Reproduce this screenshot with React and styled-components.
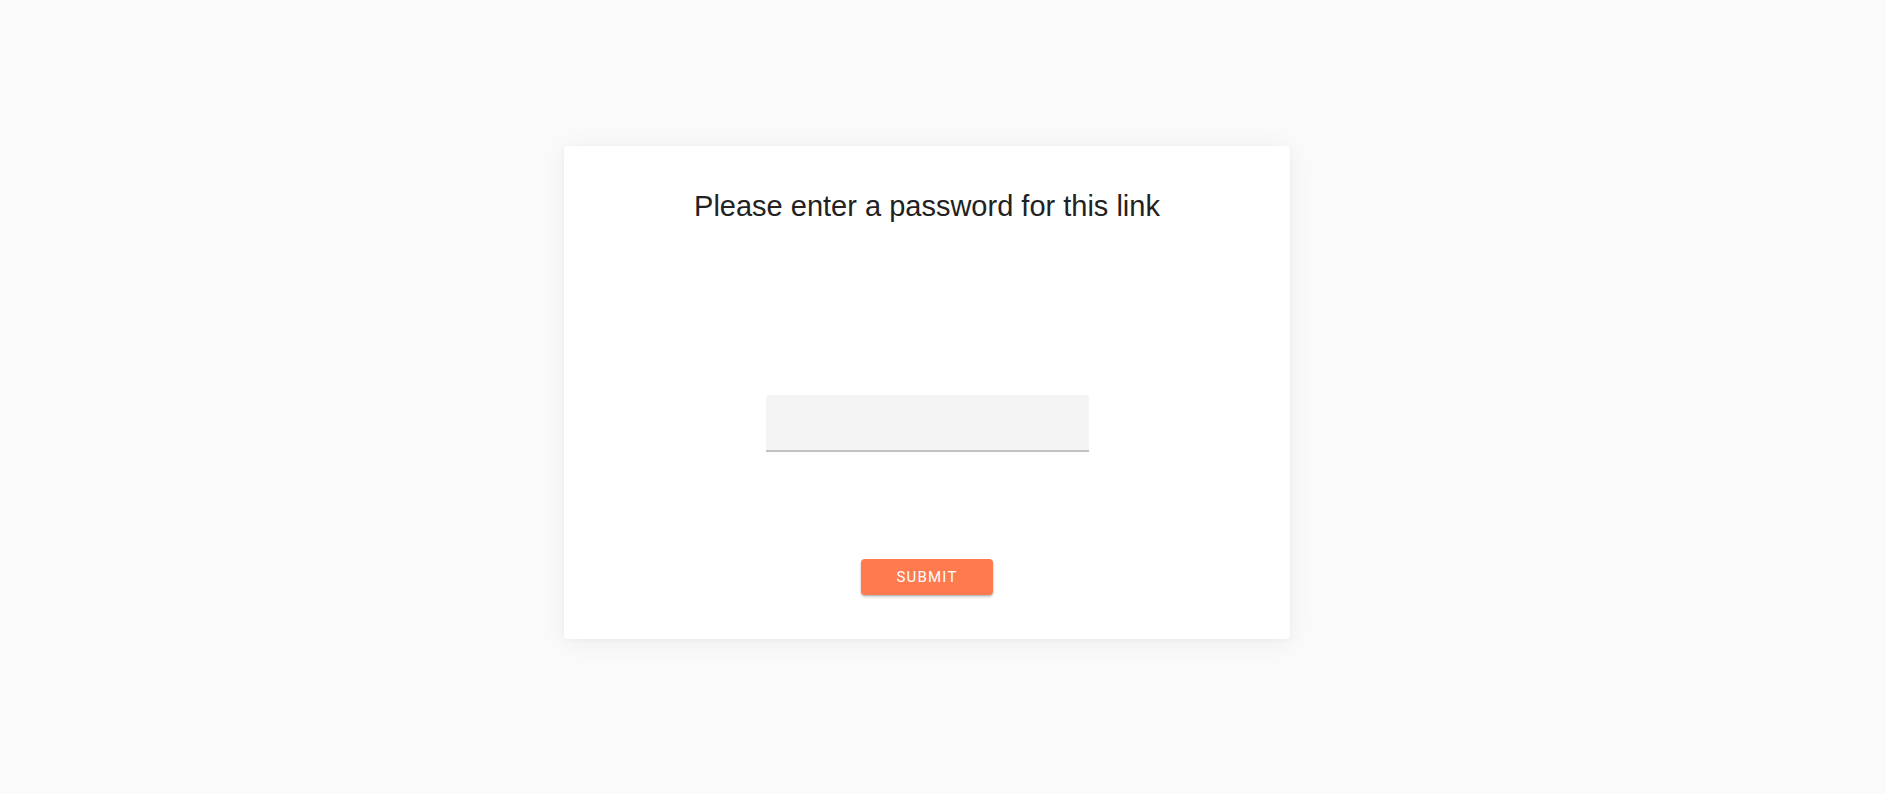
import React, { useState } from 'react';
import styled, { createGlobalStyle } from 'styled-components';

const GlobalStyle = createGlobalStyle`
  html, body {
    margin: 0;
    padding: 0;
    background: #fafafa;
  }
  * {
    box-sizing: border-box;
  }
`;

const Page = styled.div`
  min-height: 100vh;
  display: flex;
  justify-content: center;
  align-items: flex-start;
  padding: 146px 32px 0 0;
  background: #fafafa;
`;

const Card = styled.form`
  width: 726px;
  display: flex;
  flex-direction: column;
  align-items: center;
  padding: 44px 0;
  background: #ffffff;
  border-radius: 4px;
  box-shadow: 0 3px 24px rgba(0, 0, 0, 0.06), 0 1px 4px rgba(0, 0, 0, 0.03);
`;

const Title = styled.h2`
  margin: 0;
  font-family: "Liberation Sans", Arial, sans-serif;
  font-size: 29px;
  font-weight: 400;
  line-height: 33px;
  color: #222222;
`;

const Field = styled.input`
  display: block;
  width: 323px;
  height: 57px;
  margin-top: 172px;
  padding: 0 12px;
  border: none;
  border-bottom: 2px solid #c2c2c2;
  border-radius: 4px 4px 0 0;
  background: #f4f4f4;
  font-family: Roboto, "Liberation Sans", sans-serif;
  font-size: 16px;
  color: #222;
  outline: none;
`;

const SubmitButton = styled.button`
  width: 132px;
  height: 36px;
  margin-top: 107px;
  border: none;
  border-radius: 4px;
  background: #ff7a4f;
  color: #ffffff;
  font-family: Roboto, "Liberation Sans", sans-serif;
  font-size: 15px;
  font-weight: 400;
  letter-spacing: 1.2px;
  text-transform: uppercase;
  cursor: pointer;
  box-shadow: 0 2px 3px rgba(0, 0, 0, 0.2), 0 1px 1px rgba(0, 0, 0, 0.12);
`;

export default function App() {
  const [password, setPassword] = useState('');

  return (
    <>
      <GlobalStyle />
      <Page>
        <Card onSubmit={e => e.preventDefault()}>
          <Title>Please enter a password for this link</Title>
          <Field
            type="password"
            value={password}
            onChange={e => setPassword(e.target.value)}
          />
          <SubmitButton type="submit">Submit</SubmitButton>
        </Card>
      </Page>
    </>
  );
}
